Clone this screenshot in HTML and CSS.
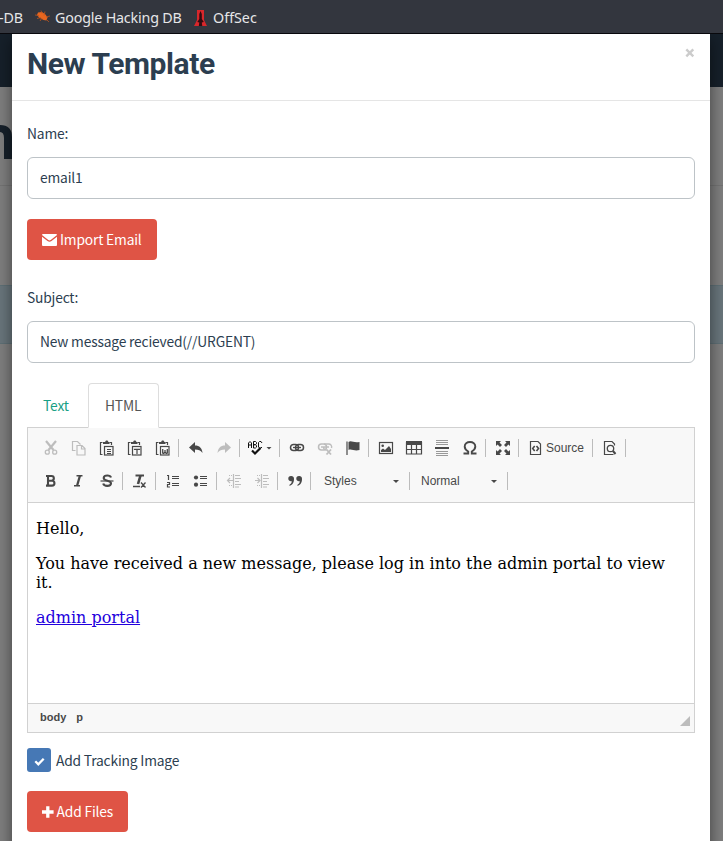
FILE: index.html
```html
<!DOCTYPE html>
<html lang="en">
<head>
<meta charset="utf-8">
<title>New Template</title>
<link rel="stylesheet" href="styles.css">
</head>
<body>
<header class="bookmarks">
  <span class="bm bm-first">-DB</span>
  <svg class="bm-bug" width="15" height="13" viewBox="0 0 15 13"><path d="M3 2.500l4-.5 3.500 2.500 2 3-1 3-3-.5-4.500-2.500-2-2.500z" fill="#e8661f"/><path d="M0 5l4 .5M2 8.500l4-1M5 11l2-3M6 .5l1 3M10 1.500l-1 4M15 6l-4 1M14 12l-3-3" stroke="#bd5420" stroke-width=".8"/></svg>
  <span class="bm bm-google">Google Hacking DB</span>
  <svg class="bm-off" width="13" height="16" viewBox="0 0 13 16"><path d="M3 0h7v10l3 6H0l3-6z" fill="#d8272b"/><path d="M6.500 1l1.300 3v5l2 3-2 .5.5 3.500H4.800l.5-3.500-2-.5 2-3V4z" fill="#300b10"/></svg>
  <span class="bm bm-offsec">OffSec</span>
</header>
<div class="stage">
  <div class="backdrop">
    <div class="bd-nav"></div>
    <div class="bd-title"><svg width="14" height="40" viewBox="0 0 14 40"><path d="M0 4Q12 4 12 16V38H4V17Q4 11 0 11z" fill="#16202a"/></svg></div>
    <div class="bd-gap"></div>
    <div class="bd-row"></div>
  </div>
  <main class="modal">
    <div class="modal-head">
      <h1>New Template</h1>
      <svg class="close" width="10" height="10" viewBox="0 0 10 10"><path d="M1.300 1.300l7 7M8.300 1.300l-7 7" stroke="#ccc" stroke-width="2.400"/></svg>
    </div>
    <div class="modal-body">
      <label class="label">Name:</label>
      <div class="input">email1</div>
      <button class="btn btn-import"><svg width="15" height="12" viewBox="0 0 15 12"><path d="M1 0h13a1 1 0 0 1 1 1L8.700 6.100q-1.200.9-2.400 0L0 1a1 1 0 0 1 1-1zM0 2.700l5.500 4.400q2 1.500 4 0L15 2.700V11a1 1 0 0 1-1 1H1a1 1 0 0 1-1-1z" fill="#fff"/></svg><span>Import Email</span></button>
      <label class="label label-subject">Subject:</label>
      <div class="input">New message recieved(//URGENT)</div>
      <nav class="tabs"><span class="tab">Text</span><span class="tab active">HTML</span></nav>
      <section class="editor">
        <div class="toolbar">
          <div class="tools">
            <i class="ic off"><svg viewBox="0 0 16 16"><path d="M3 1l7.500 9M13 1l-7.500 9" stroke-width="2.200"/><circle cx="4.300" cy="12.200" r="2" stroke-width="1.300"/><circle cx="11.700" cy="12.200" r="2" stroke-width="1.300"/></svg></i>
            <i class="ic off"><svg viewBox="0 0 16 16"><path d="M4.500 10.500h-3v-9h5l3 3M6 5.500h5l3 3v6.500H6zM10.500 5.500V9H14"/></svg></i>
            <i class="ic"><svg viewBox="0 0 16 16"><use href="#clip"/><path d="M8 9.500h4M8 11.500h4M8 13.500h4" stroke-width="1"/></svg></i>
            <i class="ic"><svg viewBox="0 0 16 16"><use href="#clip"/><path d="M7.500 10V9.300h5V10M10 9.300v4.700"/></svg></i>
            <i class="ic"><svg viewBox="0 0 16 16"><use href="#clip"/><path d="M7.700 9v4l1 .5L10 12l1.300 1.500 1-.5V9M10 10v2.500" stroke-width="1.300"/></svg></i>
            <b class="sep"></b>
            <i class="ic"><svg viewBox="0 0 16 16"><path class="f" d="M7 2v3.500c4.500 0 7 2.500 7.500 7.500C12.500 10.500 10.500 9.600 7 9.600V13L1 7.500z"/></svg></i>
            <i class="ic off"><svg viewBox="0 0 16 16"><path class="f" d="M9 2v3.500C4.500 5.500 2 8 1.500 13 3.500 10.500 5.500 9.600 9 9.600V13l6-5.500z"/></svg></i>
            <b class="sep"></b>
            <i class="ic spell"><svg viewBox="0 0 16 16"><path d="M1.500 8V3L3 1.500 4.500 3v5M1.500 5h3M6.500 8V1.500h2l1 1v1.300l-1 .9h-2 2l1 .9v1.500l-1 .9zM15 3l-1-1.500h-1.500l-1 1V7l1 1H14l1-1" stroke="#111" stroke-width="1"/><path d="M5 10.500l3 3L13.500 8" stroke="#111" stroke-width="2.200"/></svg><em class="caret"></em></i>
            <b class="sep"></b>
            <i class="ic"><svg viewBox="0 0 16 16"><rect x="1.500" y="4.500" width="8" height="6" rx="3" stroke-width="1.500"/><rect x="6.500" y="4.500" width="8" height="6" rx="3" stroke-width="1.500"/><path d="M4 7.500h8" stroke-width="1.300"/></svg></i>
            <i class="ic off"><svg viewBox="0 0 16 16"><rect x="1.500" y="4" width="8" height="6" rx="3" stroke-width="1.500"/><path d="M7 4h4.500a3 3 0 0 1 3 4M4 7h8M6.500 7q0 3 3 3" stroke-width="1.400"/><path d="M9.500 9.500l4.500 5M14 9.500l-4.500 5" stroke-width="1.800"/></svg></i>
            <i class="ic"><svg viewBox="0 0 16 16"><path d="M2 1.500V15"/><path class="f" d="M3.500 2c3-2 5 1.300 11 0v8c-5 1.600-8-1.500-11 0z"/></svg></i>
            <b class="sep"></b>
            <i class="ic"><svg viewBox="0 0 16 16"><rect x="1.500" y="2.500" width="13" height="11"/><circle class="f" cx="4.700" cy="5.700" r="1.300"/><path class="f" d="M3 12V10l2-1.500 2 1.500 4-4 2 3v3z"/></svg></i>
            <i class="ic"><svg viewBox="0 0 16 16"><path class="f" d="M0 1h16v4H0z"/><path d="M.5 2v12h15V2M5.500 5v9M10.500 5v9M0 9.500h16"/></svg></i>
            <i class="ic"><svg viewBox="0 0 16 16"><path d="M2 .5h12M2 2.500h12M2 4.500h12M2 11.500h12M2 13.500h12M2 15.500h12" stroke="#999" stroke-width="1"/><path d="M1 8h14" stroke-width="2"/></svg></i>
            <i class="ic"><svg viewBox="0 0 16 16"><path d="M1.500 13.500h4.700v-2C3.800 10.200 2.700 8.700 2.700 6.600 2.700 3.800 5 2 8 2s5.300 1.800 5.300 4.600c0 2.100-1.100 3.600-3.500 4.900v2h4.700" stroke-width="1.900"/></svg></i>
            <b class="sep"></b>
            <i class="ic"><svg viewBox="0 0 16 16"><path class="f" d="M1 1h5L4.500 2.600 7 5 5 7 2.600 4.500 1 6zM15 1v5l-1.600-1.500L11 7 9 5l2.500-2.400L10 1zM1 15v-5l1.600 1.500L5 9l2 2-2.500 2.400L6 15zM15 15h-5l1.500-1.600L9 11l2-2 2.400 2.500L15 10z"/></svg></i>
            <b class="sep"></b>
            <i class="ic source"><svg viewBox="0 0 16 16"><path d="M2.500 1.500H10L12.500 4v10.500h-10z"/><path d="M6.700 6L4.700 8.500l2 2.500M8.500 6l2 2.500-2 2.500" stroke-width="1.600"/></svg><span>Source</span></i>
            <b class="sep"></b>
            <i class="ic"><svg viewBox="0 0 16 16"><path d="M12.500 5.500V4L10 1.500H2.500v13h9"/><circle cx="8.500" cy="8.500" r="3.200" stroke-width="1.300"/><path d="M11 11l2.500 3" stroke-width="2"/></svg></i>
            <b class="sep"></b>
          </div>
          <div class="tools">
            <i class="ic"><svg viewBox="0 0 16 16"><path d="M3 3h5.500a2.200 2.200 0 0 1 0 4.700H5h4a2.400 2.400 0 0 1 0 4.900H3M5 3v9.500" stroke-width="2.100"/></svg></i>
            <i class="ic"><svg viewBox="0 0 16 16"><path d="M5.500 2.700h6M3 12.700h6" stroke-width="1.600"/><path d="M9 2.500L6 13" stroke-width="2.300"/></svg></i>
            <i class="ic"><svg viewBox="0 0 16 16"><path d="M12 4.500C11.500 3 10 2.500 8.300 2.500 6 2.500 4.700 3.500 4.700 5c0 3.500 7.300 2 7.300 5.300 0 1.700-1.500 2.600-3.800 2.600-2 0-3.500-.7-4-2.400" stroke-width="2.100"/><path d="M1.500 8h13" stroke-width="1.200"/></svg></i>
            <b class="sep"></b>
            <i class="ic"><svg viewBox="0 0 16 16"><path d="M3.500 2.500h8.500" stroke-width="2"/><path d="M8.500 2.500L6 11" stroke-width="2.600"/><path d="M1 13.500h7M9 9.500l4.500 5M13.500 9.500l-4.500 5" stroke-width="1.300"/></svg></i>
            <b class="sep"></b>
            <i class="ic"><svg viewBox="0 0 16 16"><path d="M2 2.500h1.500v4.500M2 9.500h2.500v2H2.500v2.500H5" stroke-width="1.200"/><path d="M7 3.500h7M7 5.500h7M7 10.500h7M7 12.500h7" stroke-width="1.100"/></svg></i>
            <i class="ic"><svg viewBox="0 0 16 16"><circle class="f" cx="3" cy="4.500" r="2.100"/><circle class="f" cx="3" cy="11.700" r="2.100"/><path d="M7 3.500h7M7 5.500h7M7 10.500h7M7 12.500h7" stroke-width="1.100"/></svg></i>
            <b class="sep"></b>
            <i class="ic off"><svg viewBox="0 0 16 16"><path d="M7.500 1v14M9 2.500h5M9 5.500h6M9 8.500h4M9 11.500h6M9 14h4M2 7.500h5M4 5L1.500 7.500 4 10"/><path d="M3 2.500h3M3 12.500h3" stroke-dasharray="1 1"/></svg></i>
            <i class="ic off"><svg viewBox="0 0 16 16"><path d="M7.500 1v14M9 2.500h5M9 5.500h6M9 8.500h4M9 11.500h6M9 14h4M1 7.500h5M3.500 5L6 7.500 3.500 10"/><path d="M3 2.500h3M3 12.500h3" stroke-dasharray="1 1"/></svg></i>
            <b class="sep"></b>
            <i class="ic"><svg viewBox="0 0 16 16"><path class="f" d="M4 3a2.700 2.700 0 0 1 3 3c0 4-2 6-4.500 7v-1.300C4 11 4.800 9.700 4.800 8.200 3 8.700 1.300 7.500 1.300 5.800A2.700 2.700 0 0 1 4 3zM12 3a2.700 2.700 0 0 1 3 3c0 4-2 6-4.500 7v-1.300c1.500-.7 2.300-2 2.300-3.500C11 8.700 9.300 7.500 9.300 5.800A2.700 2.700 0 0 1 12 3z"/></svg></i>
            <b class="sep"></b>
            <span class="combo"><span>Styles</span><em class="caret"></em></span>
            <b class="sep sep-combo"></b>
            <span class="combo"><span>Normal</span><em class="caret"></em></span>
            <b class="sep sep-combo"></b>
          </div>
        </div>
        <article class="content">
          <p>Hello,</p>
          <p>You have received a new message, please log in into the admin portal to view it.</p>
          <p><a href="#">admin portal</a></p>
        </article>
        <footer class="path"><span>body</span><span>p</span><em class="resizer"></em></footer>
      </section>
      <div class="check"><span class="box"><svg width="11" height="9" viewBox="0 0 11 9"><path d="M1.300 4.300l3 3L9.700 1.700" fill="none" stroke="#fff" stroke-width="2.300"/></svg></span><span>Add Tracking Image</span></div>
      <button class="btn btn-files"><svg width="12" height="12" viewBox="0 0 12 12"><path d="M4.300 0h3.400v4.300H12v3.400H7.700V12H4.300V7.700H0V4.300h4.300z" fill="#fff"/></svg><span>Add Files</span></button>
    </div>
  </main>
</div>
<svg class="defs"><defs><g id="clip"><path d="M3.500 14.500h-2v-12h2M10.500 2.500h2V5"/><path class="f" d="M4 4V2h2l1-1.500h1.500L9.500 2h1v2z"/><rect x="5.500" y="6.500" width="8.500" height="8.500"/></g></defs></svg>
</body>
</html>
```
FILE: styles.css
```css
* { box-sizing: border-box; }
body {
  margin: 0;
  height: 841px;
  overflow: hidden;
  color: #2c3e50;
  font: 13.8px/21px "Noto Sans CJK SC", sans-serif;
  letter-spacing: -.18px;
}
.bookmarks {
  display: flex;
  align-items: center;
  height: 34px;
  background: #33363e;
  border-bottom: 1px solid #08080c;
  color: #e6e6e8;
  font: 14.3px/20px "Noto Sans", sans-serif;
  letter-spacing: -.19px;
  white-space: nowrap;
}
.bm { padding-top: 2px; }
.bm-first { width: 35px; text-indent: -1px; }
.bm-google { margin-left: 5px; width: 139px; }
.bm-off { margin-top: 2px; }
.bm-offsec { margin-left: 6px; letter-spacing: 0; }
.stage { position: relative; height: 807px; overflow: hidden; }
.backdrop { position: absolute; inset: 0; background: #7f7f7f; }
.bd-nav { height: 53px; background: #16202a; }
.bd-title { height: 99px; padding-top: 34px; border-bottom: 1px solid #747474; }
.bd-title svg { display: block; }
.bd-gap { height: 99px; }
.bd-row { height: 59px; background: #69767c; border: solid #5f7076; border-width: 1px 0; }
.modal {
  position: relative;
  height: 820px;
  margin: 0 13px 0 12px;
  background: #fff;
  box-shadow: 0 5px 15px rgba(0, 0, 0, .5);
}
.modal-head {
  display: flex;
  justify-content: space-between;
  height: 67px;
  padding: 13px 15px 0 15px;
  border-bottom: 1px solid #e5e5e5;
}
h1 { margin: 0; font: bold 30px/33px Roboto, sans-serif; letter-spacing: -.42px; }
.close { margin-top: 1px; }
.modal-body { padding: 22px 15px 0; }
.label { display: block; height: 21px; margin-bottom: 13px; }
.label-subject { margin-top: 27px; }
.input {
  height: 42px;
  padding: 9px 12px;
  border: 1px solid #bdc3c7;
  border-radius: 6px;
}
.btn {
  display: flex;
  align-items: center;
  height: 41px;
  padding: 0 15px;
  border: 0;
  border-radius: 4px;
  background: #df5445;
  color: #fff;
  font: inherit;
  letter-spacing: inherit;
  white-space: nowrap;
}
.btn-import { width: 130px; margin-top: 20px; gap: 3px; }
.btn-files { width: 101px; margin-top: 19px; gap: 3px; }
.tabs { display: flex; height: 45px; margin-top: 20px; margin-bottom: -1px; position: relative; }
.tab { width: 61px; height: 45px; padding: 11px 15px; color: #18a085; border: 1px solid transparent; }
.tab.active {
  width: 71px;
  padding-left: 16px;
  color: #555;
  background: #fff;
  border-color: #ddd #ddd #fff;
  border-radius: 4px 4px 0 0;
}
.editor { height: 306px; border: 1px solid #d1d1d1; font-family: "Liberation Sans", sans-serif; letter-spacing: 0; }
.toolbar {
  display: flex;
  flex-direction: column;
  gap: 15px;
  height: 75px;
  padding: 11px 8px 0;
  background: #f8f8f8;
  border-bottom: 1px solid #d1d1d1;
}
.tools { display: flex; align-items: center; height: 18px; }
.ic { display: flex; align-items: center; width: 28px; padding: 0 5.5px 0 6.5px; font-style: normal; flex: none; }
.ic svg { width: 16px; height: 16px; flex: none; overflow: visible; fill: none; stroke: #484848; stroke-width: 1.2; }
.ic .f, .defs .f { fill: #484848; stroke: none; }
.off { opacity: .33; }
.sep { width: 1px; height: 18px; margin: 0 2px; background: #bcbcbc; flex: none; }
.sep-combo { margin-left: 1px; }
.spell { width: 35px; padding: 0 0 0 5px; gap: 3px; }
.source { width: 69px; gap: 2.5px; color: #484848; font-size: 12px; }
.source span { padding-top: 1px; }
.caret { width: 6px; height: 3px; background: #484848; clip-path: polygon(0 0, 100% 0, 50% 100%); flex: none; }
.combo {
  display: flex;
  align-items: center;
  justify-content: space-between;
  width: 95px;
  padding: 1px 9px 0 11px;
  color: #484848;
  font-size: 12px;
}
.combo + .sep + .combo { width: 94px; padding-left: 9px; }
.content { height: 200px; padding: 16px 8px; color: #000; font: 16px/19px "DejaVu Serif", serif; }
.content p { margin: 0 0 16px; }
.content a { color: #20d; }
.path {
  position: relative;
  display: flex;
  gap: 10px;
  height: 29px;
  padding: 3px 12px;
  background: #f8f8f8;
  border-top: 1px solid #d1d1d1;
  color: #484848;
  font-size: 11px;
  font-weight: bold;
}
.resizer {
  position: absolute;
  right: 4px;
  bottom: 6px;
  width: 10px;
  height: 10px;
  background: #bcbcbc;
  clip-path: polygon(100% 0, 100% 100%, 0 100%);
}
.check { display: flex; align-items: center; gap: 5px; height: 24px; margin-top: 15px; }
.box { display: grid; place-items: center; width: 24px; height: 24px; padding: 2px 0 0 1px; border-radius: 3px; background: #4678b5; }
.defs { position: absolute; width: 0; height: 0; }
```
